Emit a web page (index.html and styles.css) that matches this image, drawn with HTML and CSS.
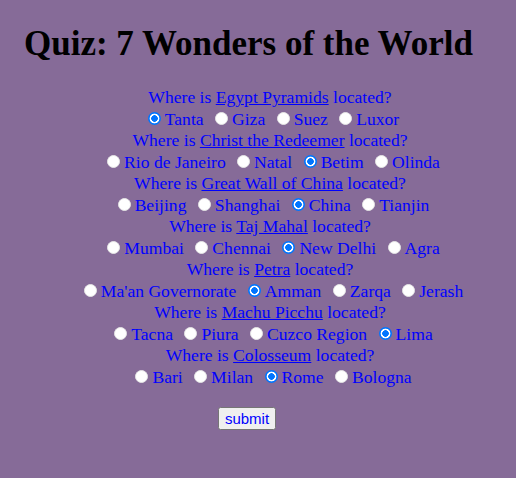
FILE: index.html
```html
<!DOCTYPE html>
<html>
<head>
<meta charset="utf-8">
<link rel="stylesheet" href="styles.css">
</head>
<body>
<h1 class="title">Quiz: 7 Wonders of the World</h1>
<form class="quiz">
  <div class="q">Where is <u>Egypt Pyramids</u> located?</div>
  <div class="opts"><label><input type="radio" name="q1" checked>Tanta</label> <label><input type="radio" name="q1">Giza</label> <label><input type="radio" name="q1">Suez</label> <label><input type="radio" name="q1">Luxor</label></div>
  <div class="q">Where is <u>Christ the Redeemer</u> located?</div>
  <div class="opts"><label><input type="radio" name="q2">Rio de Janeiro</label> <label><input type="radio" name="q2">Natal</label> <label><input type="radio" name="q2" checked>Betim</label> <label><input type="radio" name="q2">Olinda</label></div>
  <div class="q">Where is <u>Great Wall of China</u> located?</div>
  <div class="opts"><label><input type="radio" name="q3">Beijing</label> <label><input type="radio" name="q3">Shanghai</label> <label><input type="radio" name="q3" checked>China</label> <label><input type="radio" name="q3">Tianjin</label></div>
  <div class="q">Where is <u>Taj Mahal</u> located?</div>
  <div class="opts"><label><input type="radio" name="q4">Mumbai</label> <label><input type="radio" name="q4">Chennai</label> <label><input type="radio" name="q4" checked>New Delhi</label> <label><input type="radio" name="q4">Agra</label></div>
  <div class="q">Where is <u>Petra</u> located?</div>
  <div class="opts"><label><input type="radio" name="q5">Ma'an Governorate</label> <label><input type="radio" name="q5" checked>Amman</label> <label><input type="radio" name="q5">Zarqa</label> <label><input type="radio" name="q5">Jerash</label></div>
  <div class="q">Where is <u>Machu Picchu</u> located?</div>
  <div class="opts"><label><input type="radio" name="q6">Tacna</label> <label><input type="radio" name="q6">Piura</label> <label><input type="radio" name="q6">Cuzco Region</label> <label><input type="radio" name="q6" checked>Lima</label></div>
  <div class="q">Where is <u>Colosseum</u> located?</div>
  <div class="opts"><label><input type="radio" name="q7">Bari</label> <label><input type="radio" name="q7">Milan</label> <label><input type="radio" name="q7" checked>Rome</label> <label><input type="radio" name="q7">Bologna</label></div>
  <div class="actions"><button type="button" class="submit">submit</button></div>
</form>
</body>
</html>
```
FILE: styles.css
```css
html, body {
  background: #866b98;
}
body {
  margin: 8px;
  font-family: "Liberation Serif", serif;
}
.title {
  font-size: 35px;
  font-weight: bold;
  margin: 16px 0 0 16px;
  color: #000;
}
.quiz {
  margin: 23px 0 0 24px;
  text-align: center;
  color: #0000ff;
  font-size: 17.6px;
  line-height: 21.5px;
}
.opts input {
  -webkit-appearance: none;
  appearance: none;
  width: 13px;
  height: 13px;
  margin: 3px 4px 0 7px;
  border-radius: 50%;
  background: #fff;
  border: 1px solid #e6e6e6;
  box-sizing: border-box;
  vertical-align: 0;
}
.opts input:checked {
  border: none;
  background: radial-gradient(circle, #0075ff 0 3px, #fff 3.6px 4.6px, #0075ff 5.2px);
}
.actions {
  margin-top: 19px;
  padding-right: 46px;
}
.submit {
  font-family: "Liberation Sans", sans-serif;
  font-size: 15px;
  color: #0000ff;
  padding: 1px 5px;
}
```
